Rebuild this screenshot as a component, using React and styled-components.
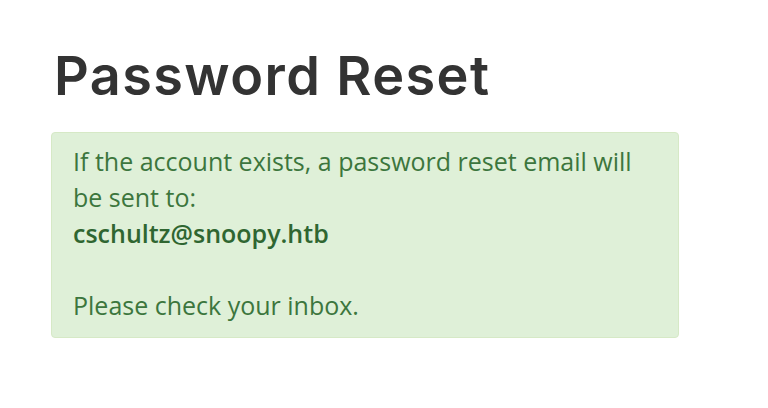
import React from 'react'
import styled, { createGlobalStyle } from 'styled-components'

const GlobalStyle = createGlobalStyle`
	html, body {
		margin: 0;
		padding: 0;
		background: #ffffff;
	}
	body {
		width: 768px;
		height: 408px;
		overflow: hidden;
	}
`

const Page = styled.main`
	padding: 43px 0 0 51px;
	display: flex;
	flex-direction: column;
	gap: 24px;
`

const Title = styled.h1`
	margin: 0;
	padding-left: 3px;
	font-family: 'Inter', 'Liberation Sans', sans-serif;
	font-size: 54px;
	font-weight: 600;
	line-height: 65px;
	letter-spacing: 1.4px;
	color: #333333;
`

const Alert = styled.div`
	box-sizing: border-box;
	width: 628px;
	height: 206px;
	padding: 10px 21px 12px;
	background: #dff0d8;
	border: 1px solid #d6e9c6;
	border-radius: 4px;
	color: #3c763d;
	font-family: 'Open Sans', 'Liberation Sans', sans-serif;
	font-size: 25px;
	line-height: 36px;
`

const Email = styled.strong`
	font-weight: 600;
	color: #2f6631;
`

export default function App() {
	return (
		<>
			<GlobalStyle />
			<Page>
				<Title>Password Reset</Title>
				<Alert>
					If the account exists, a password reset email will
					<br />
					be sent to:
					<br />
					<Email>cschultz@snoopy.htb</Email>
					<br />
					<br />
					Please check your inbox.
				</Alert>
			</Page>
		</>
	)
}
